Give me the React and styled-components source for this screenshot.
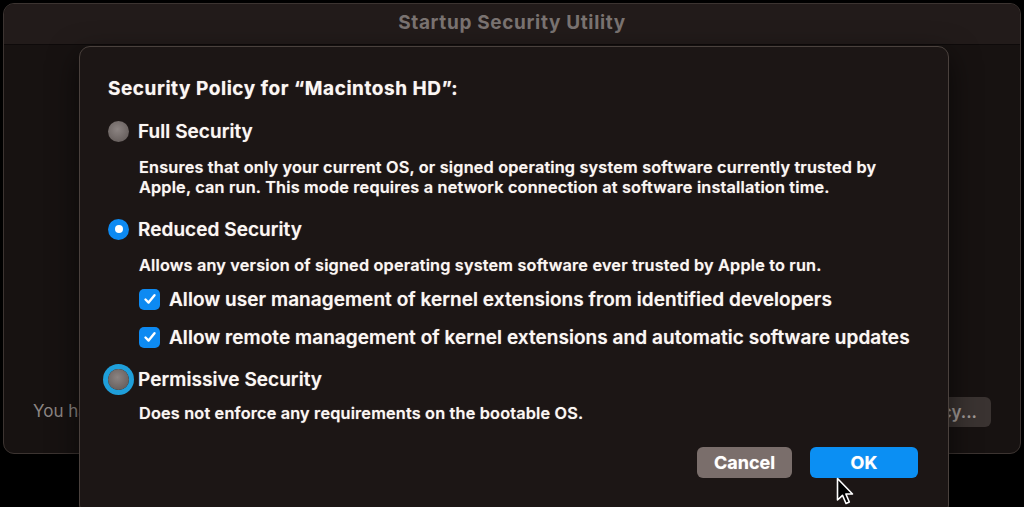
import React from 'react'
import styled, { createGlobalStyle } from 'styled-components'

const FONT = `Inter, 'Noto Sans', 'Liberation Sans', sans-serif`

const GlobalStyle = createGlobalStyle`
  html, body {
    margin: 0;
    padding: 0;
    background: #000;
    font-family: ${FONT};
    overflow: hidden;
  }
`

const ScPage = styled.div`
  position: relative;
  width: 1024px;
  height: 507px;
  padding: 3px;
  box-sizing: border-box;
  background: #000;
`

const ScWindow = styled.div`
  width: 1018px;
  height: 451px;
  box-sizing: border-box;
  border: 1px solid #3c3431;
  border-radius: 11px;
  background: #171211;
  display: flex;
  flex-direction: column;
  overflow: hidden;
`

const ScTitleBar = styled.div`
  height: 41px;
  flex: none;
  box-sizing: border-box;
  padding-bottom: 3px;
  background: #221b1a;
  border-bottom: 1px solid #0e0a0a;
  display: flex;
  align-items: center;
  justify-content: center;
  color: #7a7371;
  font-weight: 700;
  font-size: 19px;
  letter-spacing: 0.65px;
`

const ScWindowBody = styled.div`
  flex: 1;
  display: flex;
  align-items: flex-end;
  justify-content: space-between;
  padding: 0 29px 26px 29px;
`

const ScHint = styled.div`
  color: #8c8583;
  font-size: 17px;
  margin-bottom: 6px;
`

const ScBackButton = styled.div`
  height: 30px;
  padding: 0 14px;
  border-radius: 6px;
  background: #3a3331;
  color: #a19a97;
  font-size: 17px;
  font-weight: 600;
  display: flex;
  align-items: center;
`

const ScSheet = styled.div`
  position: absolute;
  left: 79px;
  top: 46px;
  width: 870px;
  height: 470px;
  box-sizing: border-box;
  border: 1px solid #4a413d;
  border-radius: 11px;
  background: #1c1615;
  box-shadow: 0 10px 30px rgba(0, 0, 0, 0.6);
  padding: 31px 28px 0 28px;
  display: flex;
  flex-direction: column;
  color: #fbf7f4;
  text-shadow: 0 0 1px rgba(255, 240, 230, 0.55);
`

const ScHeading = styled.div`
  font-weight: 700;
  font-size: 19px;
  line-height: 22px;
  letter-spacing: 0.55px;
`

const ScOption = styled.div`
  display: flex;
  align-items: center;
  height: 24px;
  margin-top: ${(p) => p.$gap}px;
  margin-left: ${(p) => p.$indent || 0}px;
  gap: 9px;
`

const ScLabel = styled.div`
  font-size: 19px;
  font-weight: 600;
  letter-spacing: 0.05px;
  white-space: nowrap;
`

const ScDesc = styled.div`
  margin-top: ${(p) => p.$gap}px;
  margin-left: 31px;
  font-size: 16.3px;
  font-weight: 600;
  line-height: 20px;
  letter-spacing: 0.17px;
  white-space: nowrap;
`

const ScRadio = styled.div`
  width: 21px;
  height: 21px;
  flex: none;
  border-radius: 50%;
  box-sizing: border-box;
  display: flex;
  align-items: center;
  justify-content: center;
  background: ${(p) =>
    p.$checked
      ? '#0d8af2'
      : 'radial-gradient(circle at 45% 40%, #8c8482 0%, #6a6260 70%, #5a5351 100%)'};
  box-shadow: ${(p) => (p.$focused ? '0 0 0 5px #1f9fda' : 'none')};
  &::after {
    content: '';
    display: ${(p) => (p.$checked ? 'block' : 'none')};
    width: 8px;
    height: 8px;
    border-radius: 50%;
    background: #fff;
  }
`

const ScCheck = styled.div`
  width: 21px;
  height: 21px;
  flex: none;
  border-radius: 5px;
  background: #0d8af2;
  display: flex;
  align-items: center;
  justify-content: center;
`

const ScButtons = styled.div`
  display: flex;
  justify-content: flex-end;
  gap: 18px;
  margin-top: 24px;
  margin-right: 2px;
`

const ScButton = styled.div`
  height: 31px;
  width: ${(p) => p.$width}px;
  border-radius: 6px;
  background: ${(p) => (p.$primary ? '#0b8ff3' : '#7a6e6b')};
  color: #fff;
  font-size: 18px;
  font-weight: 700;
  display: flex;
  align-items: center;
  justify-content: center;
`

const ScCursor = styled.svg`
  position: absolute;
  left: 836px;
  top: 477px;
`

const Checkmark = () => (
  <svg width="14" height="14" viewBox="0 0 14 14">
    <path
      d="M2.5 7.5 L5.6 10.6 L11.5 3.2"
      fill="none"
      stroke="#fff"
      strokeWidth="2.4"
      strokeLinecap="round"
      strokeLinejoin="round"
    />
  </svg>
)

const App = () => (
  <ScPage>
    <GlobalStyle />
    <ScWindow>
      <ScTitleBar>Startup Security Utility</ScTitleBar>
      <ScWindowBody>
        <ScHint>You have</ScHint>
        <ScBackButton>Security Policy...</ScBackButton>
      </ScWindowBody>
    </ScWindow>

    <ScSheet>
      <ScHeading>Security Policy for “Macintosh HD”:</ScHeading>

      <ScOption $gap={19}>
        <ScRadio />
        <ScLabel>Full Security</ScLabel>
      </ScOption>
      <ScDesc $gap={14}>
        Ensures that only your current OS, or signed operating system software currently trusted by
        <br />
        Apple, can run. This mode requires a network connection at software installation time.
      </ScDesc>

      <ScOption $gap={20}>
        <ScRadio $checked />
        <ScLabel>Reduced Security</ScLabel>
      </ScOption>
      <ScDesc $gap={14}>
        Allows any version of signed operating system software ever trusted by Apple to run.
      </ScDesc>

      <ScOption $gap={12} $indent={31}>
        <ScCheck>
          <Checkmark />
        </ScCheck>
        <ScLabel>Allow user management of kernel extensions from identified developers</ScLabel>
      </ScOption>
      <ScOption $gap={14} $indent={31}>
        <ScCheck>
          <Checkmark />
        </ScCheck>
        <ScLabel>Allow remote management of kernel extensions and automatic software updates</ScLabel>
      </ScOption>

      <ScOption $gap={18}>
        <ScRadio $focused />
        <ScLabel>Permissive Security</ScLabel>
      </ScOption>
      <ScDesc $gap={12}>Does not enforce any requirements on the bootable OS.</ScDesc>

      <ScButtons>
        <ScButton $width={95}>Cancel</ScButton>
        <ScButton $width={108} $primary>
          OK
        </ScButton>
      </ScButtons>
    </ScSheet>

    <ScCursor width="20" height="30" viewBox="0 0 20 30">
      <path
        d="M1.5 1.5 L1.5 23 L6.5 18.3 L10 26.5 L13.3 25 L9.9 17 L16.5 17 Z"
        fill="#000"
        stroke="#fff"
        strokeWidth="1.6"
        strokeLinejoin="round"
      />
    </ScCursor>
  </ScPage>
)

export default App
